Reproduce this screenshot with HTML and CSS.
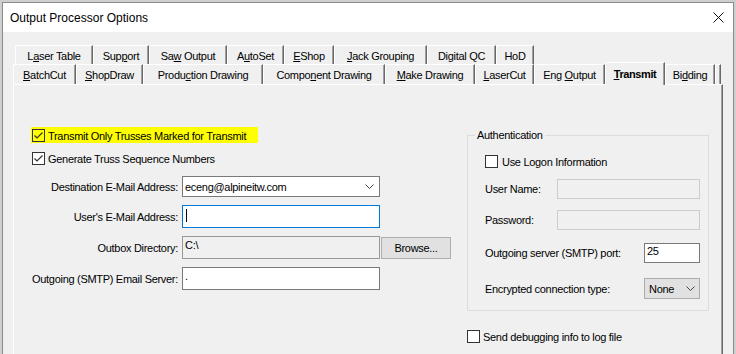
FILE: index.html
```html
<!DOCTYPE html>
<html>
<head>
<meta charset="utf-8">
<title>Output Processor Options</title>
<link rel="stylesheet" href="styles.css">
</head>
<body>
<div class="window">
  <div class="titlebar">
    <span class="title">Output Processor Options</span>
    <svg class="close" width="11" height="11" viewBox="0 0 11 11"><path d="M0.5 0.5 L10.5 10.5 M10.5 0.5 L0.5 10.5" stroke="#111" stroke-width="1" fill="none"/></svg>
  </div>
  <div class="client">
    <div class="tabrow back">
      <div class="tab"><span>L<u>a</u>ser Table</span></div>
      <div class="tab"><span>Sup<u>p</u>ort</span></div>
      <div class="tab"><span>Sa<u>w</u> Output</span></div>
      <div class="tab"><span>A<u>u</u>toSet</span></div>
      <div class="tab"><span><u>E</u>Shop</span></div>
      <div class="tab"><span><u>J</u>ack Grouping</span></div>
      <div class="tab"><span>Digital QC</span></div>
      <div class="tab"><span>HoD</span></div>
    </div>
    <div class="tabrow front">
      <div class="tab"><span><u>B</u>atchCut</span></div>
      <div class="tab"><span><u>S</u>hopDraw</span></div>
      <div class="tab"><span>Produ<u>c</u>tion Drawing</span></div>
      <div class="tab"><span>Compo<u>n</u>ent Drawing</span></div>
      <div class="tab"><span><u>M</u>ake Drawing</span></div>
      <div class="tab"><span><u>L</u>aserCut</span></div>
      <div class="tab"><span>Eng <u>O</u>utput</span></div>
      <div class="tab sel"><span><u>T</u>ransmit</span></div>
      <div class="tab"><span>Bi<u>d</u>ding</span></div>
      <div class="tab"></div>
    </div>
    <div class="panel">
      <div class="left">
        <div class="hl">
          <span class="cb clear"><svg width="11" height="11" viewBox="0 0 11 11"><path d="M1.5 5.5 L4 8 L9.5 2.5" stroke="#333" stroke-width="1.2" fill="none"/></svg></span>
          <span class="cbl">Transmit Only Trusses Marked for Transmit</span>
        </div>
        <div class="cbrow gen">
          <span class="cb"><svg width="11" height="11" viewBox="0 0 11 11"><path d="M1.5 5.5 L4 8 L9.5 2.5" stroke="#333" stroke-width="1.2" fill="none"/></svg></span>
          <span class="cbl">Generate Truss Sequence Numbers</span>
        </div>
        <div class="form">
          <span class="lbl">Destination E-Mail Address:</span>
          <div class="combo edit field"><span class="val">eceng@alpineitw.com</span><svg class="chev" width="9" height="5" viewBox="0 0 9 5"><path d="M0.5 0.5 L4.5 4.5 L8.5 0.5" stroke="#444" stroke-width="1" fill="none"/></svg></div>

          <span class="lbl">User's E-Mail Address:</span>
          <div class="tb focus field"><span class="caret"></span></div>

          <span class="lbl">Outbox Directory:</span>
          <div class="tb ro field">C:\</div>
          <div class="btn">Browse...</div>

          <span class="lbl">Outgoing (SMTP) Email Server:</span>
          <div class="tb field">.</div>
        </div>
      </div>
      <div class="right">
        <fieldset class="group">
          <legend>Authentication</legend>
          <div class="gbody">
            <div class="cbrow logon"><span class="cb"></span><span class="cbl">Use Logon Information</span></div>
            <div class="grow user"><span class="glbl">User Name:</span><div class="tb dis wide"></div></div>
            <div class="grow pass"><span class="glbl">Password:</span><div class="tb dis wide"></div></div>
            <div class="grow port"><span class="glbl2">Outgoing server (SMTP) port:</span><div class="tb small">25</div></div>
            <div class="grow enc"><span class="glbl2">Encrypted connection type:</span><div class="combo drop small"><span class="val">None</span><svg class="chev" width="9" height="5" viewBox="0 0 9 5"><path d="M0.5 0.5 L4.5 4.5 L8.5 0.5" stroke="#444" stroke-width="1" fill="none"/></svg></div></div>
          </div>
        </fieldset>
        <div class="cbrow debug"><span class="cb"></span><span class="cbl">Send debugging info to log file</span></div>
      </div>
    </div>
  </div>
</div>
</body>
</html>
```

FILE: styles.css
```css
* { box-sizing: border-box; }
html, body { margin: 0; padding: 0; }
body {
  width: 736px;
  height: 354px;
  overflow: hidden;
  background: #cfcfcf;
  font-family: "Liberation Sans", Arial, sans-serif;
  font-size: 11px;
  letter-spacing: -0.3px;
  color: #000;
}
.window {
  margin: 2px 0 0 2px;
  width: 732px;
  height: 352px;
  border: 1px solid #8c8c8c;
  border-bottom: 0;
  background: #f0f0f0;
  display: flex;
  flex-direction: column;
}
.titlebar {
  height: 29px;
  flex: none;
  background: #fff;
  display: flex;
  align-items: center;
  justify-content: space-between;
  padding: 0 9px 0 7px;
}
.title {
  font-size: 12px;
  letter-spacing: 0;
  color: #000;
}
.close { display: block; }
.client {
  flex: 1;
  overflow: hidden;
  padding-top: 13px;
}
.tabrow {
  display: flex;
  align-items: flex-start;
}
.back { margin-left: 12px; height: 19px; }
.front { margin-left: 10px; height: 20px; }
.tab {
  height: 100%;
  flex: none;
  display: flex;
  align-items: center;
  justify-content: center;
  white-space: nowrap;
  border-top: 1px solid #fff;
  border-left: 1px solid #fff;
  border-right: 1px solid #696969;
  box-shadow: inset -1px 0 #a0a0a0;
  border-top-left-radius: 2px;
  background: #f0f0f0;
  padding-top: 1px;
}
.back .tab:nth-child(1) { width: 78px; }
.back .tab:nth-child(2) { width: 56px; }
.back .tab:nth-child(3) { width: 78px; }
.back .tab:nth-child(4) { width: 57px; }
.back .tab:nth-child(5) { width: 50px; }
.back .tab:nth-child(6) { width: 93px; }
.back .tab:nth-child(7) { width: 69px; }
.back .tab:nth-child(8) { width: 38px; }
.front .tab:nth-child(1) { width: 63px; }
.front .tab:nth-child(2) { width: 67px; }
.front .tab:nth-child(3) { width: 120px; }
.front .tab:nth-child(4) { width: 122px; }
.front .tab:nth-child(5) { width: 90px; }
.front .tab:nth-child(6) { width: 59px; }
.front .tab:nth-child(7) { width: 71px; }
.front .tab:nth-child(8) { width: 60px; }
.front .tab:nth-child(9) { width: 50px; }
.front .tab:nth-child(10) { width: 6px; }
.tab.sel {
  height: 23px;
  margin-top: -2px;
  position: relative;
  z-index: 1;
  font-weight: bold;
  letter-spacing: -0.4px;
  padding-top: 0;
}
u { text-decoration: underline; text-underline-offset: 1px; }

.panel {
  margin-left: 10px;
  width: 710px;
  height: 300px;
  border-top: 1px solid #fff;
  border-left: 1px solid #fff;
  border-right: 1px solid #696969;
  box-shadow: inset -1px 0 #a0a0a0;
  display: flex;
}
.left {
  width: 453px;
  flex: none;
  padding: 42px 0 0 17px;
}
.hl {
  width: 227px;
  height: 16px;
  background: #ffff00;
  display: flex;
  align-items: flex-start;
  padding: 2px 0 0 1px;
}
.cb {
  width: 13px;
  height: 13px;
  flex: none;
  border: 1px solid #333;
  background: #fff;
  display: flex;
  align-items: center;
  justify-content: center;
}
.cb.clear { background: transparent; }
.cb svg { display: block; }
.cbl {
  line-height: 13px;
  padding-top: 1px;
  margin-left: 3px;
  white-space: nowrap;
}
.cbrow {
  display: flex;
  align-items: flex-start;
  height: 13px;
}
.gen { margin-top: 9px; padding-left: 1px; }

.form {
  margin-top: 11px;
  display: grid;
  grid-template-columns: 151px 198px 71px;
  grid-template-rows: 21px 23px 23px 23px;
  row-gap: 8px;
  align-items: center;
}
.lbl {
  grid-column: 1;
  text-align: right;
  padding-right: 4px;
  white-space: nowrap;
}
.field { grid-column: 2; }
.btn {
  grid-column: 3;
  margin-left: 1px;
  width: 70px;
  height: 22px;
  background: #e1e1e1;
  border: 1px solid #adadad;
  display: flex;
  align-items: center;
  justify-content: center;
}
.tb {
  height: 23px;
  background: #fff;
  border: 1px solid #7a7a7a;
  padding: 2px 0 0 2px;
  line-height: 13px;
  white-space: nowrap;
}
.tb.focus { border-color: #0078d7; display: flex; align-items: flex-start; }
.tb.ro { background: #f0f0f0; border-color: #999; }
.caret {
  display: block;
  width: 1px;
  height: 13px;
  background: #000;
  margin: 1px 0 0 1px;
}
.combo {
  height: 21px;
  border: 1px solid #7a7a7a;
  background: #fff;
  display: flex;
  align-items: center;
  justify-content: space-between;
  padding: 0 5px 0 2px;
}
.combo .val { white-space: nowrap; }
.chev { display: block; flex: none; }

.right {
  flex: none;
  width: 242px;
}
.group {
  margin: 43px 0 0 0;
  padding: 0 0 11px 0;
  width: 242px;
  min-width: 0;
  border: 1px solid #dcdcdc;
}
.group legend {
  margin-left: 7px;
  padding: 0 2px;
  line-height: 14px;
}
.gbody { padding-left: 17px; }
.logon { margin-top: 13px; }
.logon .cbl { margin-left: 4px; }
.grow {
  display: flex;
  align-items: center;
}
.glbl { width: 72px; flex: none; white-space: nowrap; }
.glbl2 { width: 159px; flex: none; white-space: nowrap; }
.user { margin-top: 11px; height: 20px; }
.pass { margin-top: 11px; height: 20px; }
.port { margin-top: 13px; height: 20px; }
.enc { margin-top: 15px; height: 21px; }
.tb.dis {
  height: 20px;
  background: #f0f0f0;
  border-color: #cccccc;
}
.tb.wide { width: 143px; }
.tb.small { width: 56px; height: 20px; padding-top: 1px; }
.combo.drop {
  background: #e1e1e1;
  border-color: #adadad;
  padding: 0 4px 0 4px;
}
.combo.small { width: 56px; }
.debug { margin-top: 19px; }
```
